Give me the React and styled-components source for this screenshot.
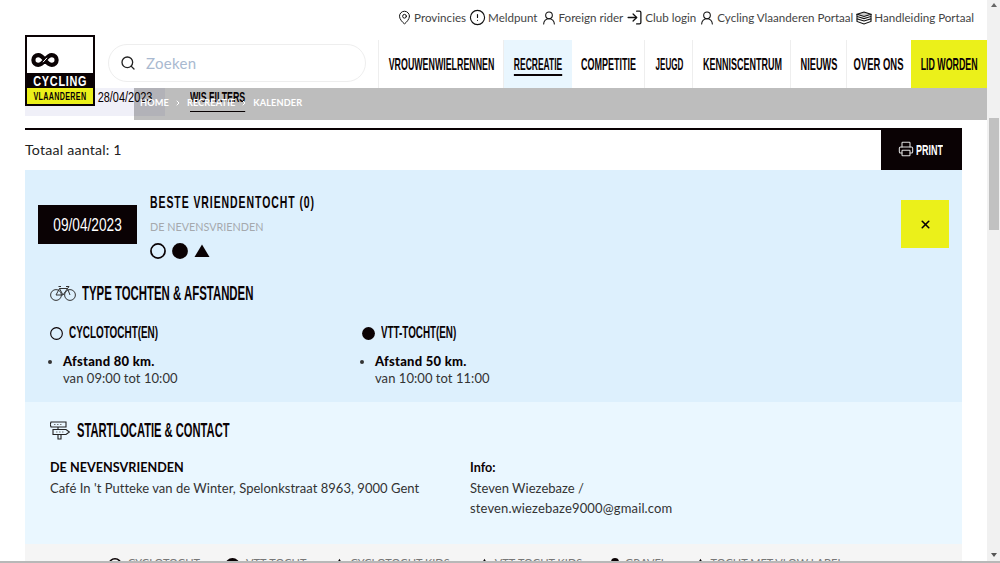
import React from "react";
import styled, { createGlobalStyle } from "styled-components";
import { MapPin, CircleAlert, UserRound, LogIn, Search, Printer, X, ChevronRight } from "lucide-react";

const DISPLAY = `"Liberation Sans", Arial, sans-serif`;
const BODY = `Lato, "Open Sans", sans-serif`;

const Global = createGlobalStyle`
  html, body { margin: 0; padding: 0; height: 563px; overflow: hidden; background: #fff; }
  * { box-sizing: border-box; }
  body { font-family: ${BODY}; color: #222; }
`;

const Frame = styled.div`width: 1000px; height: 563px; display: flex; flex-direction: column; overflow: hidden;`;
const Viewport = styled.div`height: 561px; flex: none; display: flex; overflow: hidden;`;
const BottomEdge = styled.div`height: 2px; flex: none; background: #b8b8b8;`;
const Main = styled.div`width: 987px; flex: none; display: flex; flex-direction: column; overflow: hidden; > * { flex: none; }`;

/* The display face of the site is a condensed one: this narrows a real text run horizontally. */
const Squeezed = styled.span`
  display: inline-block;
  white-space: nowrap;
  transform: scaleX(${p => p.$sx});
  transform-origin: ${p => p.$origin || "left"} center;
`;

const ScrollTrack = styled.div`width: 13px; flex: none; background: #f1f1f1; display: flex; flex-direction: column; align-items: center;`;
const ScrollThumb = styled.div`width: 10px; height: 112px; background: #c1c1c1; margin-top: 111px;`;
const ScrollSpacer = styled.div`flex: 1;`;
const ArrowUp = styled.div`width: 0; height: 0; margin-top: 3px; border-left: 3px solid transparent; border-right: 3px solid transparent; border-bottom: 4px solid #666;`;
const ArrowDown = styled.div`width: 0; height: 0; margin-bottom: 4px; border-left: 3px solid transparent; border-right: 3px solid transparent; border-top: 4px solid #555;`;

const TopBar = styled.div`height: 40px; display: flex; justify-content: flex-end; align-items: center; padding: 0 13px 5px 0; gap: 3px;`;
const TopLink = styled.a`display: flex; align-items: center; gap: 2px; font-size: 11.6px; color: #444; white-space: nowrap; svg { color: #111; flex: none; }`;

const NavRow = styled.div`height: 48px; display: flex; padding-left: 25px; position: relative; z-index: 2; background: #fff;`;
const Logo = styled.div`width: 70px; height: 71px; margin-top: -5px; flex: none; background: #0a0204; border: 2px solid #0a0204; display: flex; flex-direction: column; z-index: 3;`;
const LogoTop = styled.div`height: 36px; background: #fff; display: flex; align-items: flex-end; padding: 0 0 6px 4px;`;
const LogoName = styled.div`height: 15px; color: #fff; font: 700 15px/15px ${DISPLAY}; letter-spacing: 1px; display: flex; justify-content: center;`;
const LogoRegion = styled.div`height: 16px; background: #ebf01a; color: #0a0204; font: 700 10.5px/16px ${DISPLAY}; letter-spacing: .5px; display: flex; justify-content: center;`;

const SearchBox = styled.div`width: 258px; height: 38px; margin: 4px 12px 0 13px; border: 1px solid #eee; border-radius: 19px; flex: none; display: flex; align-items: center; padding-left: 11px; gap: 10px; color: #a9b9d0; font-size: 15px; letter-spacing: .3px; svg { color: #222; }`;

const Nav = styled.nav`display: flex; flex: 1; border-left: 1px solid #eee;`;
const NavItem = styled.a`
  width: ${p => p.$w}px; flex: none; display: flex; align-items: center; justify-content: center;
  padding-left: 1px;
  font: 700 16.5px/17px ${DISPLAY}; color: #0a0204;
  border-right: 1px solid ${p => (p.$plain ? "transparent" : "#eee")};
  background: ${p => p.$bg || "transparent"};
`;
const NavLabel = styled(Squeezed)`padding: 2px 0 1px; margin-bottom: -1px; border-top: 1px solid transparent; border-bottom: 2px solid ${p => (p.$active ? "#0a0204" : "transparent")};`;

const FilterStrip = styled.div`height: 40px; padding-left: 25px; display: flex; align-items: flex-start; position: relative;`;
const FilterBox = styled.div`width: 140px; height: 28px; flex: none; background: #f0f0f8; padding-left: 66px; font: 400 15.5px/18px ${DISPLAY}; color: #0a0204;`;
const ClearLink = styled(Squeezed)`margin-left: 25px; height: 24px; font: 700 15px/18px ${DISPLAY}; color: #0a0204; border-bottom: 1px solid #0a0204;`;
const Crumbs = styled.div`position: absolute; top: 0; left: 134px; right: 0; height: 32px; background: rgba(0,0,0,.26); display: flex; align-items: center; padding: 0 0 3px 6px; gap: 5px; color: #fff; font: 700 9.2px ${BODY}; letter-spacing: .1px; z-index: 1;`;

const ResultBar = styled.div`margin: 0 25px; height: 42px; padding-bottom: 1px; border-top: 2px solid #0a0204; display: flex; justify-content: space-between; align-items: center; font-size: 14.2px; letter-spacing: .2px;`;
const PrintButton = styled.button`width: 81px; height: 42px; margin-top: -1px; padding: 0 0 0 17px; border: 0; background: #0a0204; color: #fff; display: flex; align-items: center; gap: 2px; font: 700 15px ${DISPLAY}; svg { color: #ddd; flex: none; }`;

const Card = styled.div`margin: 0 25px; display: flex; flex-direction: column;`;
const Upper = styled.section`height: 232px; background: #ddf0fd; display: flex; flex-direction: column;`;
const EventHead = styled.div`display: flex; align-items: flex-start; padding: 25px 13px 0;`;
const DateBadge = styled.div`width: 99px; height: 39px; margin-top: 10px; background: #0a0204; color: #fff; font: 400 19px/39px ${DISPLAY}; display: flex; justify-content: center; flex: none;`;
const EventInfo = styled.div`margin-left: 13px;`;
const EventTitle = styled.h2`margin: 0; font: 700 17px/16px ${DISPLAY}; letter-spacing: 1.5px; color: #0a0204;`;
const EventOrg = styled.div`margin-top: 8px; font: 400 10.8px/16px ${BODY}; color: #a5a9ad;`;
const Markers = styled.div`display: flex; gap: 6px; margin-top: 8px; height: 16px;`;
const CloseButton = styled.button`width: 48px; height: 48px; margin: 5px 0 0 auto; border: 0; padding: 0; background: #ebf01a; display: flex; align-items: center; justify-content: center; color: #0a0204;`;

const SectionHeading = styled.h3`display: flex; align-items: center; gap: ${p => p.$gap}px; margin: ${p => p.$top}px 0 0; padding: 0 25px; font: 700 20px/24px ${DISPLAY}; color: #0a0204; svg { flex: none; }`;
const Columns = styled.div`display: grid; grid-template-columns: 312px 312px; padding: 0 25px; margin-top: 18px;`;
const RideType = styled.div`display: flex; align-items: center; gap: 6px; font: 700 16px/20px ${DISPLAY}; color: #0a0204;`;
const RideList = styled.ul`margin: 10px 0 0; padding: 0 0 0 13px; font-size: 13px; line-height: 17px; color: #333; letter-spacing: .05px;`;
const RideName = styled.strong`display: block; color: #0a0204; font-weight: 900; letter-spacing: .25px;`;

const Lower = styled.section`height: 142px; background: #eaf7ff; padding-top: 16px;`;
const ContactGrid = styled.div`display: grid; grid-template-columns: 420px 240px; padding: 0 25px; margin-top: 16px; font-size: 13px; line-height: 20px; color: #333; letter-spacing: .03px;`;
const ContactHead = styled.strong`display: block; color: #0a0204; font-weight: 700; font-size: 12.6px;`;
const Email = styled.span`letter-spacing: .15px;`;

const Legend = styled.div`height: 40px; background: #f5f5f5; display: flex; padding: 14px 0 0 83px;`;
const LegendItem = styled.div`display: flex; gap: 6px; margin-right: ${p => p.$mr}px; font: 400 11px/10px ${BODY}; color: #777; white-space: nowrap;`;
const LegendLabel = styled.span``;

const Ring = ({ size = 16, w = 1.7 }) => (
  <svg width={size} height={size} viewBox="0 0 16 16"><circle cx="8" cy="8" r={8 - w / 2 - 0.1} fill="none" stroke="#0a0204" strokeWidth={w} /></svg>
);
const Dot = ({ size = 16 }) => (
  <svg width={size} height={size} viewBox="0 0 16 16"><circle cx="8" cy="8" r="7.9" fill="#0a0204" /></svg>
);
const Tri = ({ size = 16 }) => (
  <svg width={size} height={size} viewBox="0 0 16 16"><path d="M8 1.5 15.5 14H.5Z" fill="#0a0204" /></svg>
);

const InfinityMark = () => (
  <svg width="28" height="14" viewBox="0 0 28 14" fill="none">
    <path stroke="#0a0204" strokeWidth="4.2" d="M14 7C11 3 9.5 2.2 7.2 2.2a4.8 4.8 0 0 0 0 9.6c2.3 0 3.8-.8 6.8-4.8s4.5-4.8 6.8-4.8a4.8 4.8 0 0 1 0 9.6c-2.3 0-3.8-.8-6.8-4.8z" />
    <path stroke="#fff" strokeWidth="1" d="M12 9.2 16 4.8" />
  </svg>
);

const BookStack = () => (
  <svg width="16" height="14" viewBox="0 0 16 14" fill="none" stroke="#111" strokeWidth="1.1">
    <path d="M1 3.2 8 1l7 2.2-7 2.2z" fill="#ccc" />
    <path d="M1 3.2v2.2l7 2.2 7-2.2V3.2" />
    <path d="M1 5.4v2.4l7 2.2 7-2.2V5.4" />
    <path d="M1 7.8v2.6L8 13l7-2.6V7.8" />
  </svg>
);

const RoadBike = () => (
  <svg width="26" height="16" viewBox="0 0 26 16" fill="none" stroke="#333" strokeWidth="1">
    <circle cx="6" cy="10" r="5.4" />
    <circle cx="20" cy="10" r="5.4" />
    <path d="M6 10 9.5 3.5h8L20 10M9.5 3.5 13 10H6M17.5 3.5 13 10M8.5 1.5h2.5M16 1.5h3l-1.5 2" />
  </svg>
);

const Signpost = () => (
  <svg width="20" height="19" viewBox="0 0 20 19" fill="none" stroke="#222" strokeWidth="1.1">
    <path d="M1 1h15v5H1L.2 3.5zM3 8.5h13l3.4 2.5L16 13.5H3zM8 6v2.5M8 13.5V18h3v-4.5" />
    <path d="M4 3.5h8M6 11h8" strokeDasharray="1.5 1.5" stroke="#777" />
  </svg>
);

const topLinks = [
  [<MapPin size={15} strokeWidth={1.6} key="a" />, "Provincies"],
  [<CircleAlert size={17} strokeWidth={1.6} key="b" />, "Meldpunt"],
  [<UserRound size={16} strokeWidth={1.6} key="c" />, "Foreign rider"],
  [<LogIn size={17} strokeWidth={1.8} key="d" />, "Club login"],
  [<UserRound size={16} strokeWidth={1.6} key="e" />, "Cycling Vlaanderen Portaal"],
  [<BookStack key="f" />, "Handleiding Portaal"],
];
const navItems = [
  { t: "VROUWENWIELRENNEN", w: 125, sx: 0.536 },
  { t: "RECREATIE", w: 68, sx: 0.514, active: true, bg: "#e9f6fe", plain: true },
  { t: "COMPETITIE", w: 73, sx: 0.545 },
  { t: "JEUGD", w: 48, sx: 0.49 },
  { t: "KENNISCENTRUM", w: 98, sx: 0.545 },
  { t: "NIEUWS", w: 56, sx: 0.56 },
  { t: "OVER ONS", w: 64, sx: 0.573, plain: true },
  { t: "LID WORDEN", w: 76, sx: 0.536, bg: "#ebf01a", plain: true },
];
const legend = [
  { icon: <Ring size={14} />, label: "CYCLOTOCHT", mr: 25 },
  { icon: <Dot size={15} />, label: "VTT-TOCHT", mr: 29 },
  { icon: <Tri size={9} />, label: "CYCLOTOCHT KIDS", mr: 30 },
  { icon: <Tri size={9} />, label: "VTT-TOCHT KIDS", mr: 29 },
  { icon: <Dot size={8} />, label: "GRAVEL", mr: 29 },
  { icon: <Tri size={9} />, label: "TOCHT MET VLOW LABEL", mr: 0 },
];

export default function App() {
  return (
    <Frame>
      <Global />
      <Viewport>
        <Main>
          <TopBar>
            {topLinks.map(([icon, label]) => (
              <TopLink key={label}>{icon}{label}</TopLink>
            ))}
          </TopBar>
          <NavRow>
            <Logo>
              <LogoTop><InfinityMark /></LogoTop>
              <LogoName><Squeezed $sx={0.725} $origin="center">CYCLING</Squeezed></LogoName>
              <LogoRegion><Squeezed $sx={0.68} $origin="center">VLAANDEREN</Squeezed></LogoRegion>
            </Logo>
            <SearchBox><Search size={16} strokeWidth={2} />Zoeken</SearchBox>
            <Nav>
              {navItems.map(n => (
                <NavItem key={n.t} $w={n.w} $bg={n.bg} $plain={n.plain}>
                  <NavLabel $sx={n.sx} $origin="center" $active={n.active}>{n.t}</NavLabel>
                </NavItem>
              ))}
            </Nav>
          </NavRow>
          <FilterStrip>
            <FilterBox><Squeezed $sx={0.705}>- 28/04/2023</Squeezed></FilterBox>
            <ClearLink $sx={0.587}>WIS FILTERS</ClearLink>
            <Crumbs>
              <span>HOME</span><ChevronRight size={8} strokeWidth={3} />
              <span>RECREATIE</span><ChevronRight size={8} strokeWidth={3} />
              <span>KALENDER</span>
            </Crumbs>
          </FilterStrip>
          <ResultBar>
            <span>Totaal aantal: 1</span>
            <PrintButton><Printer size={16} strokeWidth={1.6} /><Squeezed $sx={0.6}>PRINT</Squeezed></PrintButton>
          </ResultBar>
          <Card>
            <Upper>
              <EventHead>
                <DateBadge><Squeezed $sx={0.72} $origin="center">09/04/2023</Squeezed></DateBadge>
                <EventInfo>
                  <EventTitle><Squeezed $sx={0.617}>BESTE VRIENDENTOCHT (0)</Squeezed></EventTitle>
                  <EventOrg>DE NEVENSVRIENDEN</EventOrg>
                  <Markers><Ring /><Dot /><Tri /></Markers>
                </EventInfo>
                <CloseButton><X size={13} strokeWidth={3} /></CloseButton>
              </EventHead>
              <SectionHeading $top={22} $gap={6}>
                <RoadBike /><Squeezed $sx={0.57}>TYPE TOCHTEN &amp; AFSTANDEN</Squeezed>
              </SectionHeading>
              <Columns>
                <div>
                  <RideType><Ring size={13} w={1.4} /><Squeezed $sx={0.62}>CYCLOTOCHT(EN)</Squeezed></RideType>
                  <RideList>
                    <li><RideName>Afstand 80 km.</RideName>van 09:00 tot 10:00</li>
                  </RideList>
                </div>
                <div>
                  <RideType><Dot size={13} /><Squeezed $sx={0.615}>VTT-TOCHT(EN)</Squeezed></RideType>
                  <RideList>
                    <li><RideName>Afstand 50 km.</RideName>van 10:00 tot 11:00</li>
                  </RideList>
                </div>
              </Columns>
            </Upper>
            <Lower>
              <SectionHeading $top={0} $gap={7}>
                <Signpost /><Squeezed $sx={0.558}>STARTLOCATIE &amp; CONTACT</Squeezed>
              </SectionHeading>
              <ContactGrid>
                <div>
                  <ContactHead>DE NEVENSVRIENDEN</ContactHead>
                  Café In 't Putteke van de Winter, Spelonkstraat 8963, 9000 Gent
                </div>
                <div>
                  <ContactHead>Info:</ContactHead>
                  Steven Wiezebaze /<br /><Email>steven.wiezebaze9000@gmail.com</Email>
                </div>
              </ContactGrid>
            </Lower>
            <Legend>
              {legend.map(l => (
                <LegendItem key={l.label} $mr={l.mr}>{l.icon}<LegendLabel>{l.label}</LegendLabel></LegendItem>
              ))}
            </Legend>
          </Card>
        </Main>
        <ScrollTrack>
          <ArrowUp />
          <ScrollThumb />
          <ScrollSpacer />
          <ArrowDown />
        </ScrollTrack>
      </Viewport>
      <BottomEdge />
    </Frame>
  );
}
